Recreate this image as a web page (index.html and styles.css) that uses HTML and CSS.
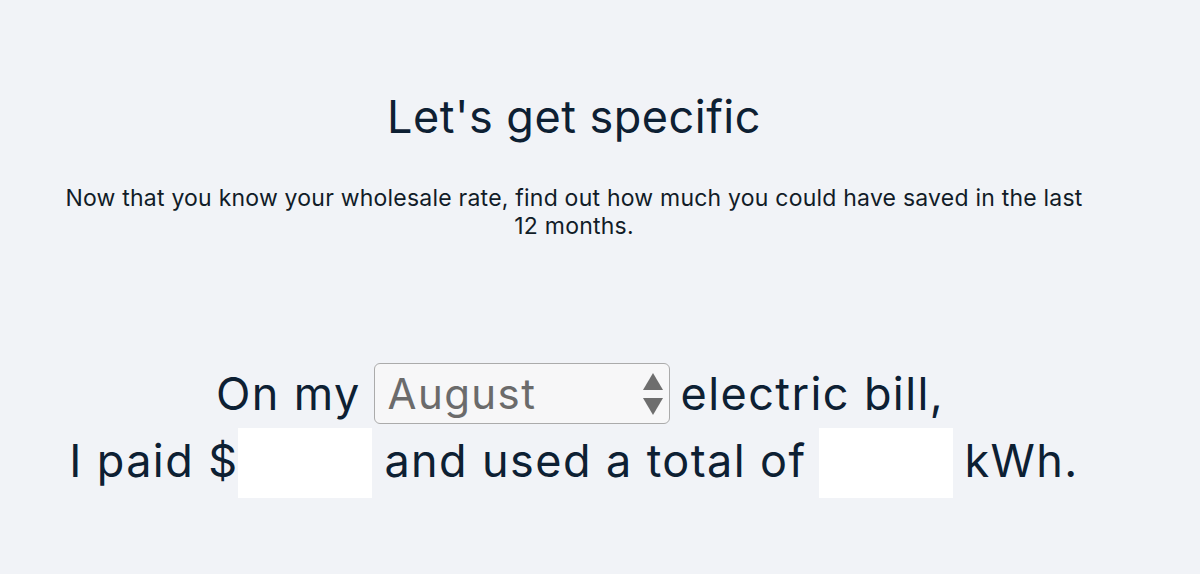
FILE: index.html
```html
<!DOCTYPE html>
<html lang="en">
<head>
<meta charset="utf-8">
<link rel="stylesheet" href="styles.css">
</head>
<body>
<main class="page">
  <h1 class="title">Let's get specific</h1>
  <p class="lead">Now that you know your wholesale rate, find out how much you could have saved in the last<br>12 months.</p>
  <form class="bill">
    <div class="line line-month">
      <span class="words">On my</span>
      <span class="select"><span class="select-value">August</span><svg class="arrows" width="22" height="44" viewBox="0 0 22 44"><path d="M11 1 L21 18 L1 18 Z" fill="#6e6e6e"/><path d="M1 26 L21 26 L11 43 Z" fill="#6e6e6e"/></svg></span>
      <span class="words">electric bill,</span>
    </div>
    <div class="line line-usage">
      <span class="words">I paid $</span>
      <span class="field field-paid"></span>
      <span class="words">and used a total of</span>
      <span class="field field-kwh"></span>
      <span class="words">kWh.</span>
    </div>
  </form>
</main>
</body>
</html>
```
FILE: styles.css
```css
html, body {
  margin: 0;
  padding: 0;
  background: #f1f3f7;
}
body {
  font-family: Inter, "Open Sans", sans-serif;
  color: #0d2033;
}
.page {
  box-sizing: border-box;
  width: 1200px;
  height: 574px;
  padding-right: 52px;
  display: flex;
  flex-direction: column;
  align-items: center;
}
.title {
  margin: 90px 0 0 0;
  font-size: 45px;
  font-weight: 400;
  line-height: 54px;
  letter-spacing: 0.5px;
}
.lead {
  margin: 40px 0 0 0;
  text-align: center;
  font-size: 23px;
  line-height: 28px;
  letter-spacing: 0.22px;
  color: #111c28;
}
.bill {
  margin-top: 123px;
  display: flex;
  flex-direction: column;
  align-items: center;
  gap: 4px;
}
.line {
  display: flex;
  align-items: center;
  font-size: 45px;
  line-height: 45px;
  letter-spacing: 1.4px;
  white-space: nowrap;
}
.line-month {
  height: 61px;
  margin-left: 12px;
}
.line-usage {
  height: 70px;
}
.line-usage .words {
  padding-bottom: 6px;
}
.select {
  display: inline-flex;
  align-items: center;
  justify-content: space-between;
  box-sizing: border-box;
  width: 296px;
  height: 61px;
  margin: 0 11px 0 13px;
  padding: 0 5px 0 13px;
  background: #f7f7f8;
  border: 1px solid #ababab;
  border-radius: 6px;
  color: #6b6b6b;
  font-size: 42px;
  letter-spacing: 1.4px;
}
.arrows {
  display: block;
}
.field {
  display: block;
  width: 134px;
  height: 70px;
  background: #ffffff;
}
.field-paid {
  margin: 0 12px 0 0;
}
.field-kwh {
  margin: 0 12px 0 12px;
}
```
